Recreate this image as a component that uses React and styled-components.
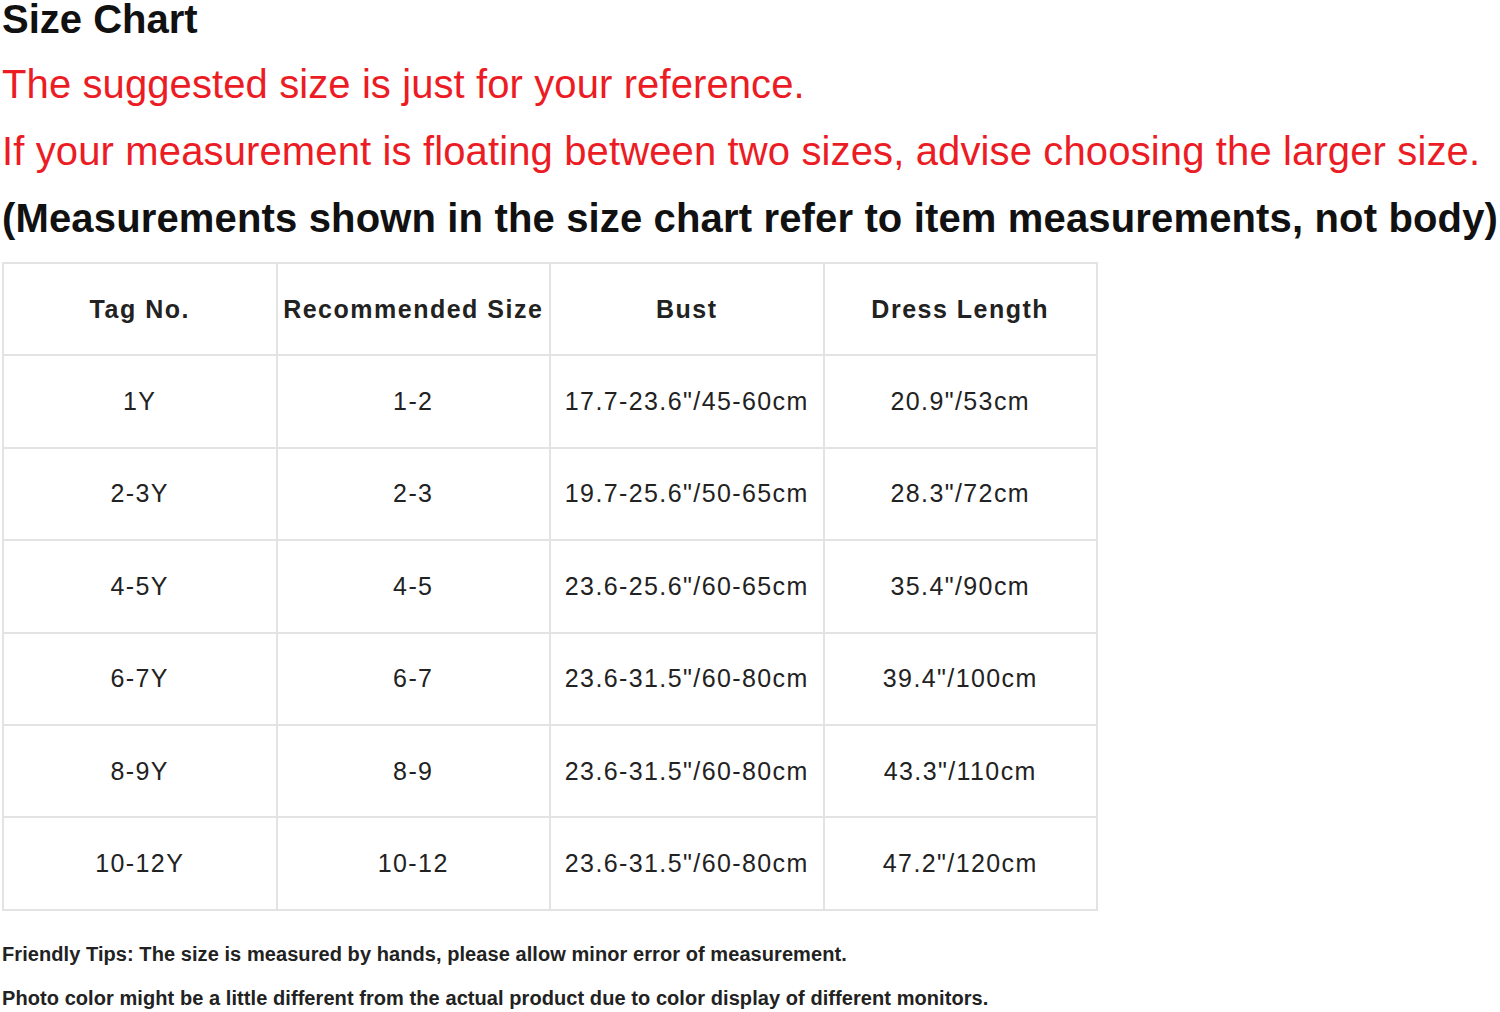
import React from 'react';
import styled, { createGlobalStyle } from 'styled-components';

const GlobalStyle = createGlobalStyle`
  body {
    margin: 0;
    background: #fff;
    font-family: "Liberation Sans", Arial, sans-serif;
  }
`;

const Page = styled.div`
  padding-left: 2px;
  width: 1500px;
  height: 1012px;
  overflow: hidden;
  box-sizing: border-box;
`;

const Title = styled.h1`
  margin: 0;
  font-size: 40px;
  line-height: 38px;
  font-weight: 700;
  color: #111;
`;

const Line = styled.p`
  margin: 0;
  font-size: 40px;
  line-height: 67px;
  white-space: nowrap;
  letter-spacing: ${(p) => p.$spacing || '0.12px'};
  color: ${(p) => (p.$red ? '#ec1c24' : '#111')};
  font-weight: ${(p) => (p.$bold ? 700 : 400)};
`;

const Notes = styled.div`
  margin-top: 13px;
`;

const Table = styled.table`
  margin-top: 10px;
  border-collapse: collapse;
  table-layout: fixed;
  width: 1096px;
  border: 2px solid #e3e3e3;
`;

const Cell = styled.td`
  border: 2px solid #e3e3e3;
  height: 90.4px;
  padding: 0;
  text-align: center;
  vertical-align: middle;
  font-size: 25px;
  letter-spacing: ${(p) => (p.$head ? '1.5px' : '1.4px')};
  font-weight: ${(p) => (p.$head ? 700 : 400)};
  color: #222;
`;

const Tips = styled.div`
  margin-top: 21px;
`;

const Tip = styled.p`
  margin: 0;
  font-size: 20px;
  line-height: 44px;
  font-weight: 700;
  letter-spacing: 0.07px;
  color: #222;
`;

const headers = ['Tag No.', 'Recommended Size', 'Bust', 'Dress Length'];

const rows = [
  ['1Y', '1-2', '17.7-23.6"/45-60cm', '20.9"/53cm'],
  ['2-3Y', '2-3', '19.7-25.6"/50-65cm', '28.3"/72cm'],
  ['4-5Y', '4-5', '23.6-25.6"/60-65cm', '35.4"/90cm'],
  ['6-7Y', '6-7', '23.6-31.5"/60-80cm', '39.4"/100cm'],
  ['8-9Y', '8-9', '23.6-31.5"/60-80cm', '43.3"/110cm'],
  ['10-12Y', '10-12', '23.6-31.5"/60-80cm', '47.2"/120cm'],
];

const App = () => {
  return (
    <Page>
      <GlobalStyle />
      <Title>Size Chart</Title>
      <Notes>
        <Line $red $spacing="0.1px">The suggested size is just for your reference.</Line>
        <Line $red $spacing="0.13px">If your measurement is floating between two sizes, advise choosing the larger size.</Line>
        <Line $bold $spacing="0.15px">(Measurements shown in the size chart refer to item measurements, not body)</Line>
      </Notes>

      <Table>
        <tbody>
          <tr>
            {headers.map((h) => (
              <Cell as="th" $head key={h}>{h}</Cell>
            ))}
          </tr>
          {rows.map((r) => (
            <tr key={r[0]}>
              {r.map((v, i) => (
                <Cell key={i}>{v}</Cell>
              ))}
            </tr>
          ))}
        </tbody>
      </Table>

      <Tips>
        <Tip>Friendly Tips: The size is measured by hands, please allow minor error of measurement.</Tip>
        <Tip>Photo color might be a little different from the actual product due to color display of different monitors.</Tip>
      </Tips>
    </Page>
  );
};

export default App;
